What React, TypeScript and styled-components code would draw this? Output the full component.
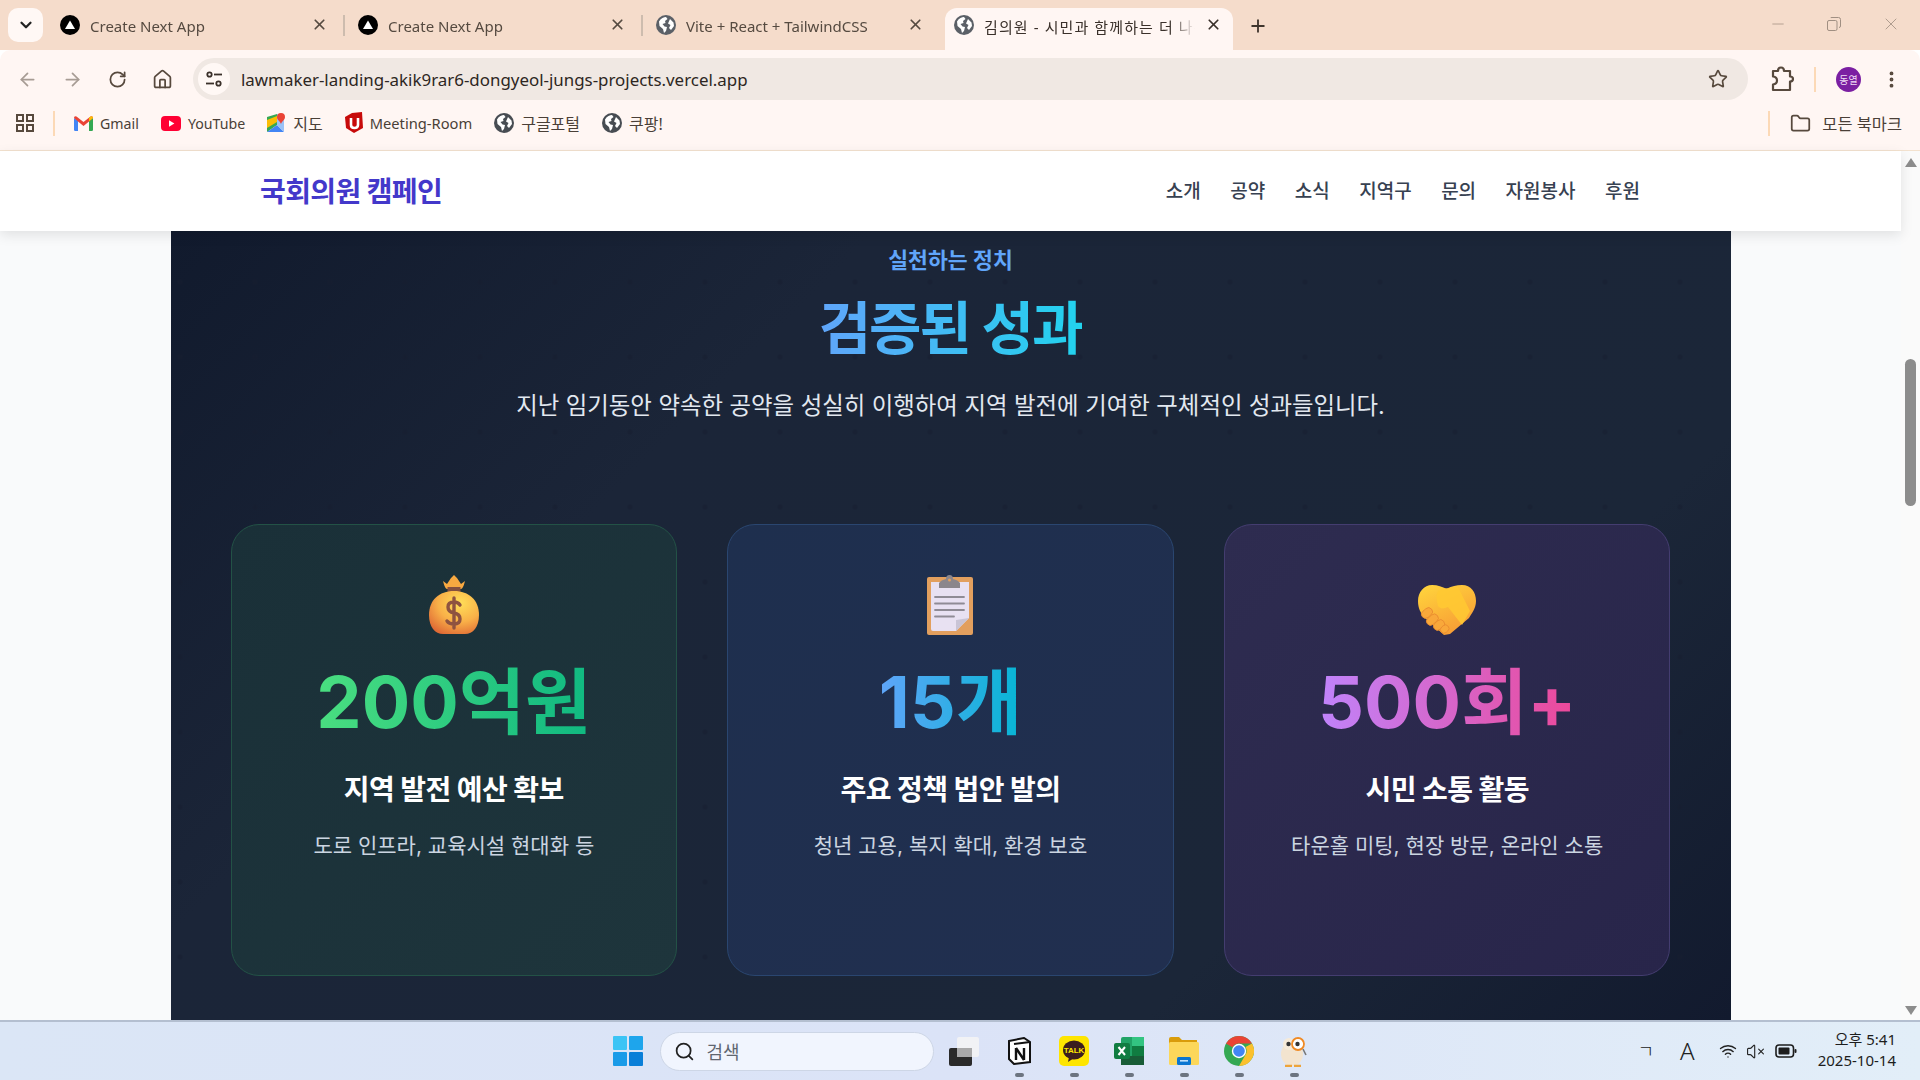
import { FunctionComponent, ReactNode } from 'react';
import styled, { createGlobalStyle } from 'styled-components';
import {
  ArrowLeft,
  ArrowRight,
  Folder,
  Home,
  Minus,
  MoreVertical,
  Plus,
  RotateCw,
  Search,
  Star,
  VolumeX,
  Wifi,
  X,
  ChevronDown,
} from 'lucide-react';

const UI_FONT = `"Noto Sans", "Noto Sans CJK KR", sans-serif`;
const PAGE_FONT = `Inter, "Noto Sans CJK KR", sans-serif`;

const GlobalStyle = createGlobalStyle`
  html, body {
    margin: 0;
    padding: 0;
    overflow: hidden;
  }
  * {
    box-sizing: border-box;
  }
`;

const Screen = styled.div`
  width: 1920px;
  height: 1080px;
  display: flex;
  flex-direction: column;
  overflow: hidden;
  font-family: ${UI_FONT};
`;

/* ---------- browser chrome ---------- */

const TabStrip = styled.div`
  height: 50px;
  flex: none;
  display: flex;
  align-items: flex-end;
  background: #f5dccb;
  padding-left: 8px;
  position: relative;
`;

const TabSearch = styled.div`
  width: 35px;
  height: 34px;
  margin: 0 8px 8px 0;
  border-radius: 10px;
  background: #fff8f5;
  display: flex;
  align-items: center;
  justify-content: center;
  color: #222;
`;

const Tab = styled.div<{ $active?: boolean }>`
  width: 288px;
  height: 42px;
  margin-right: 10px;
  padding: 0 11px 9px 9px;
  display: flex;
  align-items: center;
  gap: 10px;
  position: relative;
  border-radius: 12px 12px 0 0;
  background: ${({ $active }) => ($active ? '#fff6f3' : 'transparent')};
  color: ${({ $active }) => ($active ? '#3a302a' : '#554a40')};
`;

const TabDivider = styled.span`
  position: absolute;
  right: -6px;
  top: 7px;
  width: 2px;
  height: 21px;
  background: #cdbcae;
`;

const TabTitle = styled.span<{ $active?: boolean }>`
  flex: 1;
  font-size: 15px;
  letter-spacing: ${({ $active }) => ($active ? '1.1px' : '0')};
  white-space: nowrap;
  overflow: hidden;
  padding-top: 3px;
  -webkit-mask-image: linear-gradient(90deg, #000 88%, transparent 100%);
  mask-image: linear-gradient(90deg, #000 88%, transparent 100%);
`;

const NewTab = styled.div`
  width: 30px;
  height: 42px;
  padding-bottom: 7px;
  display: flex;
  align-items: center;
  justify-content: center;
  color: #3f352d;
`;

const WindowButtons = styled.div`
  margin-left: auto;
  height: 50px;
  display: flex;
  align-items: center;
  gap: 40px;
  padding: 0 19px 2px 0;
  color: #a08f82;
`;

const Toolbar = styled.div`
  height: 50px;
  flex: none;
  display: flex;
  align-items: center;
  padding: 8px 0 0 5px;
  background: #fff6f3;
  border-radius: 10px 10px 0 0;
  color: #57493d;
`;

const ToolButton = styled.div<{ $muted?: boolean }>`
  width: 45px;
  display: flex;
  justify-content: center;
  color: ${({ $muted }) => ($muted ? '#a79c94' : '#57493d')};
`;

const Omnibox = styled.div`
  width: 1555px;
  height: 42px;
  margin-left: 8px;
  border-radius: 21px;
  background: #f0e8e3;
  display: flex;
  align-items: center;
  padding: 0 20px 0 5px;
`;

const TuneBadge = styled.div`
  width: 32px;
  height: 32px;
  border-radius: 50%;
  background: #fff8f5;
  display: flex;
  align-items: center;
  justify-content: center;
  margin-right: 11px;
`;

const UrlText = styled.span`
  font-size: 16.9px;
  color: #2d2622;
  flex: 1;
`;

const ToolbarRight = styled.div`
  display: flex;
  align-items: center;
  margin-left: 22px;
  height: 42px;
`;

const VerticalRule = styled.span<{ $before?: string; $after?: number }>`
  display: block;
  flex: none;
  width: 2px;
  height: 25px;
  background: #fcd9b6;
  margin-left: ${({ $before }) => $before ?? '0'};
  margin-right: ${({ $after }) => $after ?? 0}px;
`;

const Avatar = styled.div`
  width: 25px;
  height: 25px;
  border-radius: 50%;
  background: #7b1fa2;
  color: #f0dcf5;
  font-size: 10px;
  display: flex;
  align-items: center;
  justify-content: center;
  margin: 0 20px 0 20px;
`;

const BookmarkBar = styled.div`
  height: 51px;
  flex: none;
  display: flex;
  align-items: center;
  padding: 0 18px 4px 15px;
  background: #fff6f3;
  border-bottom: 1px solid #f3e2cf;
  color: #57493d;
`;

const Bookmark = styled.div<{ $size: number }>`
  display: flex;
  align-items: center;
  gap: 7px;
  margin-right: 22px;
  font-size: ${({ $size }) => $size}px;
  color: #4a3f37;
  white-space: nowrap;
`;

const AllBookmarks = styled(Bookmark)`
  margin: 0;
  gap: 11px;
`;

/* ---------- page ---------- */

const Viewport = styled.div`
  flex: 1;
  min-height: 0;
  display: flex;
  background: #f9fafb;
`;

const PageColumn = styled.div`
  flex: 1;
  min-width: 0;
  display: flex;
  flex-direction: column;
`;

const NavBar = styled.header`
  height: 80px;
  flex: none;
  background: #fff;
  display: flex;
  align-items: center;
  justify-content: space-between;
  padding: 0 261px 3px 260px;
  box-shadow: 0 4px 12px rgba(0, 0, 0, 0.1);
  position: relative;
  z-index: 1;
  font-family: ${PAGE_FONT};
`;

const Logo = styled.div`
  font-size: 28px;
  font-weight: 700;
  letter-spacing: -0.6px;
  color: #4338ca;
`;

const NavList = styled.nav`
  display: flex;
  gap: 29.5px;
`;

const NavItem = styled.span`
  font-size: 19px;
  font-weight: 500;
  color: #374151;
`;

const Section = styled.section`
  flex: 1;
  width: 1560px;
  margin: 0 auto;
  overflow: hidden;
  padding: 14px 60px 0;
  font-family: ${PAGE_FONT};
  background-color: #0f172a;
  background-image:
    radial-gradient(circle, rgba(23, 30, 48, 0.5) 2.5px, transparent 3px),
    linear-gradient(135deg, #111a2d 0%, #1b2538 30%, #1b2638 75%, #121a2e 100%);
  background-size: 75px 75px, 100% 100%;
  background-position: -28.5px 13.5px, 0 0;
`;

const Eyebrow = styled.div`
  text-align: center;
  font-size: 21.6px;
  font-weight: 600;
  line-height: 30px;
  color: #60a5fa;
`;

const Title = styled.h2`
  margin: 16px 0 0;
  text-align: center;
  font-size: 57px;
  font-weight: 700;
  line-height: 75px;
  letter-spacing: -2px;
`;

const GradientText = styled.span<{ $from: string; $to: string }>`
  background-image: linear-gradient(90deg, ${({ $from }) => $from}, ${({ $to }) => $to});
  -webkit-background-clip: text;
  background-clip: text;
  color: transparent;
`;

const Lead = styled.p`
  margin: 22px 0 0;
  text-align: center;
  font-size: 23.4px;
  line-height: 36px;
  color: #e2e8f0;
`;

const CardGrid = styled.div`
  display: grid;
  grid-template-columns: repeat(3, 1fr);
  gap: 50px;
  margin-top: 100px;
`;

const Card = styled.article<{ $bg: string; $line: string }>`
  height: 452px;
  border-radius: 28px;
  padding-top: 50px;
  border: 1px solid ${({ $line }) => $line};
  background: ${({ $bg }) => $bg};
  text-align: center;
`;

const EmojiSlot = styled.div`
  height: 60px;
  display: flex;
  justify-content: center;
  align-items: flex-end;
`;

const StatValue = styled.div`
  margin-top: 22px;
  font-size: 72px;
  font-weight: 700;
  line-height: 90px;
`;

const StatTitle = styled.h3`
  margin: 23px 0 0;
  font-size: 28px;
  font-weight: 700;
  line-height: 40px;
  letter-spacing: -0.55px;
  color: #fff;
`;

const StatNote = styled.p`
  margin: 20px 0 0;
  font-size: 21px;
  line-height: 32px;
  color: #cbd5e1;
`;

const ScrollTrack = styled.div`
  width: 19px;
  flex: none;
  background: #fafafa;
  display: flex;
  flex-direction: column;
  align-items: center;
  padding: 7px 0 5px;
`;

const ScrollThumb = styled.div`
  width: 11px;
  height: 147px;
  margin-top: 192px;
  border-radius: 6px;
  background: #8c8c8c;
`;

const ScrollArrow = styled.div<{ $down?: boolean }>`
  width: 0;
  height: 0;
  border-left: 6px solid transparent;
  border-right: 6px solid transparent;
  ${({ $down }) =>
    $down ? 'border-top: 9px solid #8c8c8c; margin-top: auto;' : 'border-bottom: 9px solid #8c8c8c;'}
`;

/* ---------- taskbar ---------- */

const Taskbar = styled.footer`
  height: 60px;
  flex: none;
  display: grid;
  grid-template-columns: 1fr auto 1fr;
  align-items: center;
  border-top: 2px solid #b4bfd0;
  background: linear-gradient(90deg, #dbe6f6 0%, #dbe3f7 50%, #e2eef8 100%);
`;

const TaskCenter = styled.div`
  display: flex;
  align-items: center;
  padding-left: 14px;
`;

const StartButton = styled.div`
  width: 30px;
  height: 30px;
  margin-right: 17px;
  display: grid;
  grid-template-columns: 1fr 1fr;
  gap: 2px;
`;

const StartPane = styled.span<{ $shade: string }>`
  background: ${({ $shade }) => $shade};
  border-radius: 1px;
`;

const SearchPill = styled.div`
  width: 274px;
  height: 39px;
  border-radius: 20px;
  background: #f1f5fe;
  border: 1px solid #cdd6e6;
  display: flex;
  align-items: center;
  gap: 12px;
  padding-left: 13px;
  font-size: 18px;
  color: #5f6670;
  margin-right: 3px;
`;

const TaskIcon = styled.div<{ $running?: boolean }>`
  width: 55px;
  height: 58px;
  display: flex;
  align-items: center;
  justify-content: center;
  position: relative;
  &::after {
    content: '';
    display: ${({ $running }) => ($running ? 'block' : 'none')};
    position: absolute;
    bottom: 3px;
    left: 23px;
    width: 9px;
    height: 4px;
    border-radius: 2px;
    background: #6c7480;
  }
`;

const Tray = styled.div`
  display: flex;
  align-items: center;
  justify-content: flex-end;
  padding-right: 24px;
  color: #222;
`;

const TrayItem = styled.div<{ $gap: number }>`
  display: flex;
  align-items: center;
  margin-right: ${({ $gap }) => $gap}px;
`;

const ImeLetter = styled.span<{ $size: number }>`
  font-size: ${({ $size }) => $size}px;
  font-weight: 300;
  line-height: 1;
`;

const Clock = styled.div`
  font-size: 15px;
  line-height: 21px;
  text-align: right;
  color: #1d1d1d;
  margin: 0 0 2px 21px;
`;

/* ---------- drawings ---------- */

const NextFavicon = () => (
  <svg width="20" height="20" viewBox="0 0 20 20">
    <circle cx="10" cy="10" r="10" fill="#000" />
    <path d="M10 5.5 L15 14 H5 Z" fill="#fff" />
  </svg>
);

const GlobeIcon = ({ size = 20, color = '#5b6067' }: { size?: number; color?: string }) => (
  <svg width={size} height={size} viewBox="0 0 20 20">
    <circle cx="10" cy="10" r="10" fill={color} />
    <path
      d="M3 6.5 C5 3 8 2 10 2 L11.5 4 L9 6 L9.5 8 L6.5 9 L8.5 11.5 L11 12 L10 16 L8 18 L7 14 L3.5 11 Z"
      fill="#fff"
    />
    <path d="M14 4 L17.5 7.5 L18 11 L15 15 L13 13 L14.5 10 L12 8.5 Z" fill="#fff" />
  </svg>
);

const TuneIcon = () => (
  <svg width="20" height="20" viewBox="0 0 20 20" fill="none" stroke="#3a302a" strokeWidth="1.8">
    <circle cx="5.5" cy="5.5" r="2.2" />
    <path d="M10 5.5 H18" />
    <path d="M2 14.5 H10" />
    <circle cx="14.5" cy="14.5" r="2.2" />
  </svg>
);

const AppsIcon = () => (
  <svg width="20" height="20" viewBox="0 0 20 20" fill="none" stroke="#57493d" strokeWidth="2">
    <rect x="2" y="2" width="6" height="6" />
    <rect x="12" y="2" width="6" height="6" />
    <rect x="2" y="12" width="6" height="6" />
    <rect x="12" y="12" width="6" height="6" />
  </svg>
);

const ExtensionIcon = () => (
  <svg width="24" height="26" viewBox="0 0 24 26" fill="none" stroke="#57493d" strokeWidth="2.2" strokeLinejoin="round">
    <path d="M3 5 H8 Q8 1.5 11 1.5 Q14 1.5 14 5 H20 V10.5 Q23 10.5 23 13 Q23 15.5 20 15.5 V24 H3 V18.5 Q7 18 7 14.5 Q7 11 3 10.5 Z" />
  </svg>
);

const GmailIcon = () => (
  <svg width="19" height="15" viewBox="0 0 19 15">
    <path d="M0 2 L4 4.5 V15 H1.2 Q0 15 0 13.8 Z" fill="#4285f4" />
    <path d="M19 2 L15 4.5 V15 H17.8 Q19 15 19 13.8 Z" fill="#34a853" />
    <path d="M0 2 Q0 -0.5 2.5 0.5 L9.5 6 L16.5 0.5 Q19 -0.5 19 2 L15 5.5 L9.5 10 L4 5.5 Z" fill="#ea4335" />
    <path d="M15 1.8 L16.5 0.5 Q19 -0.5 19 2 L15 5.5 Z" fill="#fbbc04" />
  </svg>
);

const YoutubeIcon = () => (
  <svg width="20" height="15" viewBox="0 0 20 15">
    <rect width="20" height="15" rx="4" fill="#ff0033" />
    <path d="M8 4.2 L13.4 7.5 L8 10.8 Z" fill="#fff" />
  </svg>
);

const MapsIcon = () => (
  <svg width="19" height="20" viewBox="0 0 19 20">
    <path d="M0 4 L10 1 V12 L0 19 Z" fill="#34a853" />
    <path d="M0 19 L10 12 L17 19 H1 Z" fill="#4285f4" />
    <path d="M0 7 L10 3 L10 9 L0 15 Z" fill="#fbbc04" />
    <path d="M10 1 H15 L17 8 V19 L10 12 Z" fill="#9ac2f7" />
    <path d="M14 0 A4 4 0 0 1 18 4 C18 7 15 8 14 11 C13 8 10 7 10 4 A4 4 0 0 1 14 0 Z" fill="#ea4335" />
  </svg>
);

const MeetingIcon = () => (
  <svg width="18" height="22" viewBox="0 0 18 22">
    <path d="M7 1 L17 0 L18 16 L9 21 L1 16 L0 5 Z" fill="#c70a0a" />
    <path d="M6 6 V13 Q6 16 9.5 16 Q13 16 13 13 V6" fill="none" stroke="#fff" strokeWidth="2.6" />
  </svg>
);

const WindowRestore = () => (
  <svg width="14" height="14" viewBox="0 0 14 14" fill="none" stroke="#a08f82" strokeWidth="1">
    <rect x="0.5" y="3.5" width="9.5" height="10" rx="1.5" />
    <path d="M3.5 1 Q3.5 0.5 5 0.5 H11.5 Q13.5 0.5 13.5 2.5 V9 Q13.5 10.5 12 10.5" />
  </svg>
);

const MoneyBag = () => (
  <svg width="54" height="60" viewBox="0 0 54 60">
    <defs>
      <radialGradient id="bag" cx="62%" cy="28%" r="80%">
        <stop offset="0%" stopColor="#ffdf58" />
        <stop offset="55%" stopColor="#f9b048" />
        <stop offset="100%" stopColor="#df6a35" />
      </radialGradient>
    </defs>
    <path d="M16 6 L20 9 L24 3 L27 0 L30 3 L34 9 L38 6 Q36 14 34 14 H20 Q18 14 16 6 Z" fill="#f8a941" />
    <rect x="20.5" y="12" width="13" height="5" fill="#85503f" />
    <path d="M27 16 C42 16 52 25 52 40 C52 52 46 59 38 59 H16 C8 59 2 52 2 40 C2 25 12 16 27 16 Z" fill="url(#bag)" />
    <path
      d="M33 30 Q31 27 27 27 Q21 27 21 32 Q21 37 27 38 Q33 39 33 44 Q33 49 27 49 Q22 49 20 46 M27 23 V53"
      fill="none"
      stroke="#8f5340"
      strokeWidth="3.4"
      strokeLinecap="round"
    />
  </svg>
);

const Clipboard = () => (
  <svg width="46" height="60" viewBox="0 0 46 60">
    <rect x="0" y="2" width="46" height="58" rx="2" fill="#e29f5e" />
    <path d="M4 7 H42 V43 L29 56 H6 Q4 56 4 54 Z" fill="#e8e1f2" />
    <path d="M29 56 L29 45 L42 43 Z" fill="#c9c4d6" />
    <path d="M12 13 V8 Q14 5 19 4 Q19 0 22.5 0 Q26 0 26 4 Q31 5 33 8 V13 Z" fill="#8b868c" />
    <circle cx="22.5" cy="5" r="1.5" fill="#e29f5e" />
    <path d="M8 22 H37 M8 28.5 H37 M8 35 H37 M8 41.5 H27" stroke="#8f8b95" strokeWidth="1.8" strokeLinecap="round" />
  </svg>
);

const Handshake = () => (
  <svg width="58" height="50" viewBox="0 0 58 50">
    <defs>
      <linearGradient id="hand" x1="0.2" y1="0" x2="0.7" y2="1">
        <stop offset="0%" stopColor="#ffd23c" />
        <stop offset="100%" stopColor="#f79a35" />
      </linearGradient>
    </defs>
    <path
      d="M14 0 C20 0 24 2 29 4 C34 1 38 0 44 0 C53 0 58 7 58 16 C58 24 53 29 51 33 L32 49 L26 50 L6 32 C3 28 0 24 0 16 C0 7 6 0 14 0 Z"
      fill="url(#hand)"
    />
    <path d="M20 6 C26 3 33 2 40 2 L52 26 L44 40 L30 22 C26 24 22 24 20 21 Q17 10 20 6 Z" fill="#ffc933" opacity="0.85" />
    <g fill="#f9a83a" stroke="#e88a2f" strokeWidth="0.8">
      <rect x="3" y="24" width="12" height="8" rx="4" transform="rotate(-40 9 28)" />
      <rect x="8" y="31" width="13" height="8" rx="4" transform="rotate(-40 14 35)" />
      <rect x="15" y="36" width="12" height="8" rx="4" transform="rotate(-40 21 40)" />
      <rect x="22" y="41" width="9" height="7" rx="3.5" transform="rotate(-40 26 44)" />
    </g>
  </svg>
);

const NotionIcon = () => (
  <svg width="24" height="28" viewBox="0 0 24 28">
    <path d="M2 4 L17 1 L23 5 V25 L7 27 L2 22 Z" fill="#fff" stroke="#111" strokeWidth="2" />
    <path d="M7 7 L23 5" stroke="#111" strokeWidth="2" />
    <path d="M9 11 V23 M9 11 L17 23 M17 11 V23" stroke="#111" strokeWidth="2.4" fill="none" />
  </svg>
);

const KakaoIcon = () => (
  <svg width="30" height="30" viewBox="0 0 30 30">
    <rect width="30" height="30" rx="5" fill="#fee500" />
    <ellipse cx="15" cy="14" rx="11" ry="9.5" fill="#3c1e1e" />
    <path d="M10 21 L9 26 L15 22 Z" fill="#3c1e1e" />
    <text x="15" y="17" textAnchor="middle" fontSize="8" fontWeight="700" fontFamily="Liberation Sans, sans-serif" fill="#fee500">
      TALK
    </text>
  </svg>
);

const ExcelIcon = () => (
  <svg width="30" height="30" viewBox="0 0 30 30">
    <rect x="7" y="1" width="23" height="28" rx="2" fill="#21a366" />
    <rect x="18" y="1" width="12" height="9" fill="#33c481" />
    <rect x="18" y="10" width="12" height="10" fill="#107c41" />
    <rect x="7" y="20" width="23" height="9" fill="#185c37" />
    <rect x="0" y="7" width="16" height="16" rx="2" fill="#107c41" />
    <path d="M4.5 11 L11 19 M11 11 L4.5 19" stroke="#fff" strokeWidth="2" />
  </svg>
);

const FolderIcon = () => (
  <svg width="30" height="28" viewBox="0 0 30 28">
    <path d="M0 2 Q0 0 2 0 H10 L13 3 H28 V8 H0 Z" fill="#d99c0b" />
    <rect x="0" y="5" width="30" height="23" rx="1.5" fill="#fcd75a" />
    <rect x="8" y="20" width="14" height="8" rx="1.5" fill="#0b76d1" />
    <rect x="11" y="23" width="8" height="1.6" fill="#bfe0fb" />
  </svg>
);

const ChromeIcon = () => (
  <svg width="30" height="30" viewBox="0 0 30 30">
    <circle cx="15" cy="15" r="15" fill="#34a853" />
    <path d="M15 0 A15 15 0 0 1 28 7.5 H15 A7.5 7.5 0 0 0 8.5 11.2 L2 7.5 A15 15 0 0 1 15 0 Z" fill="#ea4335" />
    <path d="M28 7.5 A15 15 0 0 1 15 30 L21.5 18.8 A7.5 7.5 0 0 0 21.5 11 Z" fill="#fbc02d" />
    <circle cx="15" cy="15" r="7.2" fill="#fff" />
    <circle cx="15" cy="15" r="5.8" fill="#4285f4" />
  </svg>
);

const OwlIcon = () => (
  <svg width="30" height="32" viewBox="0 0 30 32">
    <ellipse cx="13" cy="19" rx="11" ry="12" fill="#f3e4cf" />
    <circle cx="10" cy="9" r="6" fill="#f6ead8" />
    <circle cx="19" cy="9" r="6" fill="#fff" stroke="#f08a24" strokeWidth="1.8" />
    <circle cx="9.5" cy="9" r="2.2" fill="#333" />
    <circle cx="18.5" cy="9" r="2.2" fill="#333" />
    <path d="M24 14 L27 20" stroke="#777" strokeWidth="1.6" />
    <path d="M6 31 H13 M15 31 H22" stroke="#eda43a" strokeWidth="2.4" />
  </svg>
);

const TaskViewIcon = () => (
  <svg width="30" height="30" viewBox="0 0 30 30">
    <rect x="0" y="12" width="23" height="18" rx="2" fill="#2a2a2a" />
    <rect x="8" y="1" width="22" height="20" rx="2" fill="#f3f3f4" opacity="0.9" />
    <rect x="8" y="12" width="15" height="9" fill="#a9a9aa" />
  </svg>
);

const BatteryIcon = () => (
  <svg width="22" height="14" viewBox="0 0 22 14">
    <rect x="1" y="1" width="17.5" height="12" rx="3" fill="none" stroke="#1d1d1d" strokeWidth="1.6" />
    <rect x="3.5" y="3.5" width="11" height="7" rx="1" fill="#1d1d1d" />
    <rect x="19.5" y="5" width="2" height="4" rx="1" fill="#1d1d1d" />
  </svg>
);

/* ---------- data ---------- */

const TABS: { title: string; icon: ReactNode; active?: boolean }[] = [
  { title: 'Create Next App', icon: <NextFavicon /> },
  { title: 'Create Next App', icon: <NextFavicon /> },
  { title: 'Vite + React + TailwindCSS', icon: <GlobeIcon /> },
  { title: '김의원 - 시민과 함께하는 더 나은 미래', icon: <GlobeIcon />, active: true },
];

const BOOKMARKS: { label: string; icon: ReactNode; size: number }[] = [
  { label: 'Gmail', icon: <GmailIcon />, size: 14.2 },
  { label: 'YouTube', icon: <YoutubeIcon />, size: 14.2 },
  { label: '지도', icon: <MapsIcon />, size: 16 },
  { label: 'Meeting-Room', icon: <MeetingIcon />, size: 14.7 },
  { label: '구글포털', icon: <GlobeIcon size={20} color="#474c52" />, size: 16 },
  { label: '쿠팡!', icon: <GlobeIcon size={20} color="#474c52" />, size: 16 },
];

const NAV_ITEMS = ['소개', '공약', '소식', '지역구', '문의', '자원봉사', '후원'];

const STATS = [
  {
    emoji: <MoneyBag />,
    value: '200억원',
    title: '지역 발전 예산 확보',
    note: '도로 인프라, 교육시설 현대화 등',
    from: '#4ade80',
    to: '#10b981',
    bg: 'linear-gradient(135deg, #1a3038, #1e353c)',
    line: '#235246',
  },
  {
    emoji: <Clipboard />,
    value: '15개',
    title: '주요 정책 법안 발의',
    note: '청년 고용, 복지 확대, 환경 보호',
    from: '#60a5fa',
    to: '#06b6d4',
    bg: 'linear-gradient(135deg, #1e2f4e, #212f4f)',
    line: '#2a4670',
  },
  {
    emoji: <Handshake />,
    value: '500회+',
    title: '시민 소통 활동',
    note: '타운홀 미팅, 현장 방문, 온라인 소통',
    from: '#c084fc',
    to: '#ec4899',
    bg: 'linear-gradient(135deg, #2e2c50, #28254a)',
    line: '#443d70',
  },
];

const TASK_ICONS: { key: string; icon: ReactNode; running: boolean }[] = [
  { key: 'view', icon: <TaskViewIcon />, running: false },
  { key: 'notion', icon: <NotionIcon />, running: true },
  { key: 'kakao', icon: <KakaoIcon />, running: true },
  { key: 'excel', icon: <ExcelIcon />, running: true },
  { key: 'folder', icon: <FolderIcon />, running: true },
  { key: 'chrome', icon: <ChromeIcon />, running: true },
  { key: 'owl', icon: <OwlIcon />, running: true },
];

const App: FunctionComponent = () => (
  <Screen>
    <GlobalStyle />
    <TabStrip>
      <TabSearch>
        <ChevronDown size={18} strokeWidth={3} />
      </TabSearch>
      {TABS.map(({ title, icon, active }, index) => (
        <Tab key={`${title}-${index}`} $active={active}>
          {icon}
          <TabTitle $active={active}>{title}</TabTitle>
          <X size={17} strokeWidth={2.4} />
          {index < 2 && <TabDivider />}
        </Tab>
      ))}
      <NewTab>
        <Plus size={20} strokeWidth={2.2} />
      </NewTab>
      <WindowButtons>
        <Minus size={18} strokeWidth={1} />
        <WindowRestore />
        <X size={20} strokeWidth={1} />
      </WindowButtons>
    </TabStrip>

    <Toolbar>
      <ToolButton $muted>
        <ArrowLeft size={21} />
      </ToolButton>
      <ToolButton $muted>
        <ArrowRight size={21} />
      </ToolButton>
      <ToolButton>
        <RotateCw size={19} strokeWidth={2.2} />
      </ToolButton>
      <ToolButton>
        <Home size={21} />
      </ToolButton>
      <Omnibox>
        <TuneBadge>
          <TuneIcon />
        </TuneBadge>
        <UrlText>lawmaker-landing-akik9rar6-dongyeol-jungs-projects.vercel.app</UrlText>
        <Star size={20} strokeWidth={2} />
      </Omnibox>
      <ToolbarRight>
        <ExtensionIcon />
        <VerticalRule $before="20px" />
        <Avatar>동열</Avatar>
        <MoreVertical size={21} strokeWidth={2.4} />
      </ToolbarRight>
    </Toolbar>

    <BookmarkBar>
      <AppsIcon />
      <VerticalRule $before="18px" $after={19} />
      {BOOKMARKS.map(({ label, icon, size }) => (
        <Bookmark key={label} $size={size}>
          {icon}
          {label}
        </Bookmark>
      ))}
      <VerticalRule $before="auto" $after={20} />
      <AllBookmarks $size={16.4}>
        <Folder size={21} strokeWidth={2} color="#57493d" />
        모든 북마크
      </AllBookmarks>
    </BookmarkBar>

    <Viewport>
      <PageColumn>
        <NavBar>
          <Logo>국회의원 캠페인</Logo>
          <NavList>
            {NAV_ITEMS.map((item) => (
              <NavItem key={item}>{item}</NavItem>
            ))}
          </NavList>
        </NavBar>
        <Section>
          <Eyebrow>실천하는 정치</Eyebrow>
          <Title>
            <GradientText $from="#60a5fa" $to="#22d3ee">
              검증된 성과
            </GradientText>
          </Title>
          <Lead>지난 임기동안 약속한 공약을 성실히 이행하여 지역 발전에 기여한 구체적인 성과들입니다.</Lead>
          <CardGrid>
            {STATS.map(({ emoji, value, title, note, from, to, bg, line }) => (
              <Card key={value} $bg={bg} $line={line}>
                <EmojiSlot>{emoji}</EmojiSlot>
                <StatValue>
                  <GradientText $from={from} $to={to}>
                    {value}
                  </GradientText>
                </StatValue>
                <StatTitle>{title}</StatTitle>
                <StatNote>{note}</StatNote>
              </Card>
            ))}
          </CardGrid>
        </Section>
      </PageColumn>
      <ScrollTrack>
        <ScrollArrow />
        <ScrollThumb />
        <ScrollArrow $down />
      </ScrollTrack>
    </Viewport>

    <Taskbar>
      <span />
      <TaskCenter>
        <StartButton>
          <StartPane $shade="#3cc4f5" />
          <StartPane $shade="#1ea5ec" />
          <StartPane $shade="#1a9be8" />
          <StartPane $shade="#0a7fd8" />
        </StartButton>
        <SearchPill>
          <Search size={21} color="#222" strokeWidth={2} />
          검색
        </SearchPill>
        {TASK_ICONS.map(({ key, icon, running }) => (
          <TaskIcon key={key} $running={running}>
            {icon}
          </TaskIcon>
        ))}
      </TaskCenter>
      <Tray>
        <TrayItem $gap={26}>
          <ImeLetter $size={18}>ㄱ</ImeLetter>
        </TrayItem>
        <TrayItem $gap={24}>
          <ImeLetter $size={24}>A</ImeLetter>
        </TrayItem>
        <TrayItem $gap={9}>
          <Wifi size={18} strokeWidth={1.8} />
        </TrayItem>
        <TrayItem $gap={10}>
          <VolumeX size={19} strokeWidth={1.4} />
        </TrayItem>
        <TrayItem $gap={0}>
          <BatteryIcon />
        </TrayItem>
        <Clock>
          오후 5:41
          <br />
          2025-10-14
        </Clock>
      </Tray>
    </Taskbar>
  </Screen>
);

export default App;
